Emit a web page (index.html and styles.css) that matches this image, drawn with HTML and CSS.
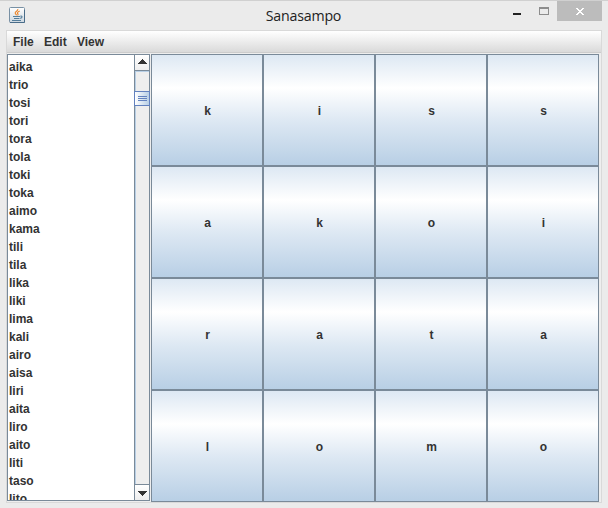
FILE: index.html
```html
<!DOCTYPE html>
<html lang="fi">
<head>
<meta charset="utf-8">
<title>Sanasampo</title>
<link rel="stylesheet" href="styles.css">
</head>
<body>
<div class="window">
  <header class="titlebar">
    <svg class="app-icon" width="16" height="16" viewBox="0 0 16 16">
      <defs><linearGradient id="tile" x1="0" y1="0" x2="0" y2="1"><stop offset="0" stop-color="#fff"/><stop offset="1" stop-color="#cdd7e0"/></linearGradient></defs>
      <rect x=".5" y=".5" width="15" height="15" rx="1" fill="url(#tile)" stroke="#7890a4"/>
      <path d="M1 15.5H15.5V3" fill="none" stroke="#496c89"/>
      <path d="M8.8 2C9.5 4 5.8 4.5 6.2 6.2C6.4 7.2 7.2 7.7 7.6 8.3M10.7 4.1C8 5.2 8 6 9 7.1C9.3 7.6 9 8 8.5 8.4" fill="none" stroke="#ec8428" stroke-width="1.1"/>
      <path d="M4 9.5H11M5 11.5H10.5M3 13.5H12M11.3 9.2C13.8 8.5 13.4 11 11.2 11.4" fill="none" stroke="#557e9b" stroke-width="1.1"/>
    </svg>
    <h1 class="title">Sanasampo</h1>
    <div class="controls">
      <svg class="control" width="28" height="20" viewBox="0 0 28 20"><path d="M11 12h8v2h-8z" fill="#222"/></svg>
      <svg class="control" width="27" height="20" viewBox="0 0 27 20"><path d="M9 6h10v8H9zM10 8v5h8V8z" fill="#8d8d8d" fill-rule="evenodd"/></svg>
      <svg class="control close" width="45" height="20" viewBox="0 0 45 20"><path d="M19 7h2v1h1v1h2V8h1V7h2v1h-1v1h-1v1h-1v1h1v1h1v1h1v1h-2v-1h-1v-1h-2v1h-1v1h-2v-1h1v-1h1v-1h1v-1h-1V9h-1V8h-1z" fill="#fff"/></svg>
    </div>
  </header>
  <main class="client">
    <nav class="menubar"><span class="menu file">File</span><span class="menu edit">Edit</span><span class="menu">View</span></nav>
    <div class="content">
      <section class="word-pane">
        <ul class="words">
          <li>aika</li><li>trio</li><li>tosi</li><li>tori</li><li>tora</li><li>tola</li><li>toki</li><li>toka</li><li>aimo</li><li>kama</li><li>tili</li><li>tila</li><li>lika</li><li>liki</li><li>lima</li><li>kali</li><li>airo</li><li>aisa</li><li>liri</li><li>aita</li><li>liro</li><li>aito</li><li>liti</li><li>taso</li><li>lito</li>
        </ul>
        <div class="scrollbar">
          <div class="arrow up"><svg width="9" height="5" viewBox="0 0 9 5" shape-rendering="crispEdges"><path d="M4 0h1v1h1v1h1v1h1v1h1v1H0V4h1V3h1V2h1V1h1z"/></svg></div>
          <div class="track before"></div>
          <div class="thumb"><i></i><i></i><i></i></div>
          <div class="track"></div>
          <div class="arrow down"><svg width="9" height="5" viewBox="0 0 9 5" shape-rendering="crispEdges"><path d="M0 0h9v1H8v1H7v1H6v1H5v1H4V4H3V3H2V2H1V1H0z"/></svg></div>
        </div>
      </section>
      <section class="board">
        <button>k</button><button>i</button><button>s</button><button>s</button>
        <button>a</button><button>k</button><button>o</button><button>i</button>
        <button>r</button><button>a</button><button>t</button><button>a</button>
        <button>l</button><button>o</button><button>m</button><button>o</button>
      </section>
    </div>
  </main>
</div>
</body>
</html>
```
FILE: styles.css
```css
* { box-sizing: border-box; }
body { margin: 0; }
.window {
  width: 608px; height: 508px; overflow: hidden;
  background: #ebebeb; border-top: 1px solid #d0d0d0;
  font: bold 12px/18px "Liberation Sans", Arial, sans-serif; color: #333;
}
.titlebar { height: 29px; display: grid; grid-template-columns: 100px 1fr 100px; padding: 0 6px 0 9px; }
.app-icon { margin-top: 6px; }
.title {
  margin: 0; padding-right: 4px; text-align: center;
  font: 400 14.2px/29px "Open Sans", "Noto Sans", sans-serif; letter-spacing: -.2px; color: #222;
}
.controls { display: flex; justify-content: flex-end; }
.control { flex: none; }
.close { background: #bcbcbc; }
.client { width: 596px; height: 473px; margin-left: 6px; border: 1px solid #d9d9d9; background: #eee; }
.menubar {
  height: 22px; padding: 2px 6px 0; display: flex;
  background: linear-gradient(#fff, #dadada); border-bottom: 1px solid #ccc;
}
.file { width: 31px; }
.edit { width: 33px; }
.content { display: flex; padding-top: 1px; }
.word-pane {
  width: 143px; height: 447px; margin-right: 1px; display: flex;
  border: 1px solid #7a8a99; background: #fff;
}
.words { flex: 1; height: 445px; overflow: hidden; margin: 0; padding: 3px 0 0 1px; list-style: none; }
.words li { height: 18px; }
.scrollbar { width: 15px; display: flex; flex-direction: column; border-left: 1px solid #7a8a99; background: #eee; }
.arrow { flex: none; height: 16px; display: flex; justify-content: center; background: linear-gradient(#fff, #eee); }
.arrow svg { fill: #333; }
.up { padding-top: 4px; border-bottom: 1px solid #7a8a99; }
.down { padding-top: 6px; border-top: 1px solid #7a8a99; }
.track { flex: 1; border-left: 1px solid #b8cfe5; }
.before { flex: none; height: 20px; border-top: 1px solid #b8cfe5; }
.thumb {
  flex: none; height: 15px; margin: 0 -1px; padding: 4px 0 0 3px; display: flex; flex-direction: column; gap: 1px;
  border: 1px solid #6382bf; background: linear-gradient(90deg, #fff, #b8cfe5);
}
.thumb i { width: 9px; height: 1px; background: #6382bf; }
.board { display: grid; grid-template-columns: repeat(4, 112px); grid-auto-rows: 112px; }
.board button {
  margin: 0; padding: 2px 0 0 1px; border: 1px solid #7a8a99; border-radius: 0;
  font: inherit; color: #333;
  background: linear-gradient(#dde8f3, #fff 30%, #dde8f3 60%, #b8cfe5);
}
```
